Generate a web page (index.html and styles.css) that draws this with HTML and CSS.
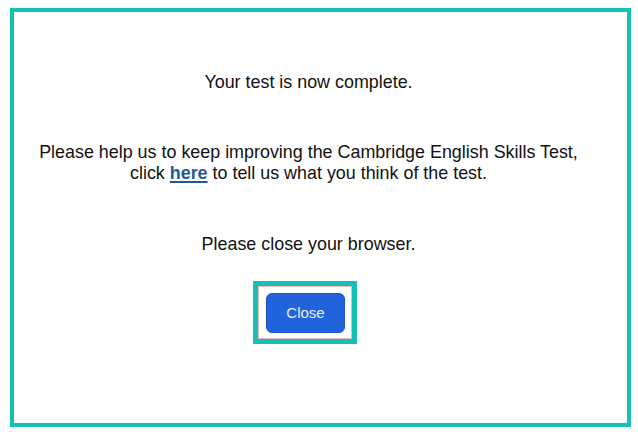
FILE: index.html
```html
<!DOCTYPE html>
<html>
<head>
<meta charset="utf-8">
<link rel="stylesheet" href="styles.css">
</head>
<body>
<div class="frame">
  <p class="msg first">Your test is now complete.</p>
  <p class="msg second">Please help us to keep improving the Cambridge English Skills Test,<br>click <a class="link" href="#">here</a> to tell us what you think of the test.</p>
  <p class="msg third">Please close your browser.</p>
  <div class="btn-wrap">
    <div class="highlight">
      <button class="close-btn">Close</button>
    </div>
  </div>
</div>
</body>
</html>
```
FILE: styles.css
```css
html, body {
  margin: 0;
  padding: 0;
  background: #ffffff;
}
body {
  font-family: "Liberation Sans", Arial, sans-serif;
  color: #111111;
}
.frame {
  box-sizing: border-box;
  width: 621px;
  height: 419px;
  margin: 8px 0 0 10px;
  border: 4px solid #17c0b5;
  padding: 61px 24px 0 0;
}
.msg {
  margin: 0;
  text-align: center;
  font-size: 17.9px;
  line-height: 21px;
}
.first {
  line-height: 18px;
}
.second {
  margin-top: 51px;
}
.third {
  margin-top: 50px;
}
.link {
  color: #1f5a96;
  font-weight: bold;
  text-decoration: underline;
  text-decoration-thickness: 2px;
  text-underline-offset: 2px;
}
.btn-wrap {
  display: flex;
  justify-content: center;
  margin-top: 26px;
  padding-right: 7px;
}
.highlight {
  box-sizing: border-box;
  width: 104px;
  height: 63px;
  border: 5px solid #17c0b5;
  box-shadow: inset 0 0 0 1px #f3b7b7;
  display: flex;
  align-items: center;
  justify-content: center;
  padding-left: 1px;
}
.close-btn {
  width: 79px;
  height: 40px;
  border: 1px solid #1c55c4;
  border-radius: 6px;
  background: #2163da;
  color: #e8eeff;
  font-family: "Liberation Sans", Arial, sans-serif;
  font-size: 15px;
  padding: 0;
}
```
